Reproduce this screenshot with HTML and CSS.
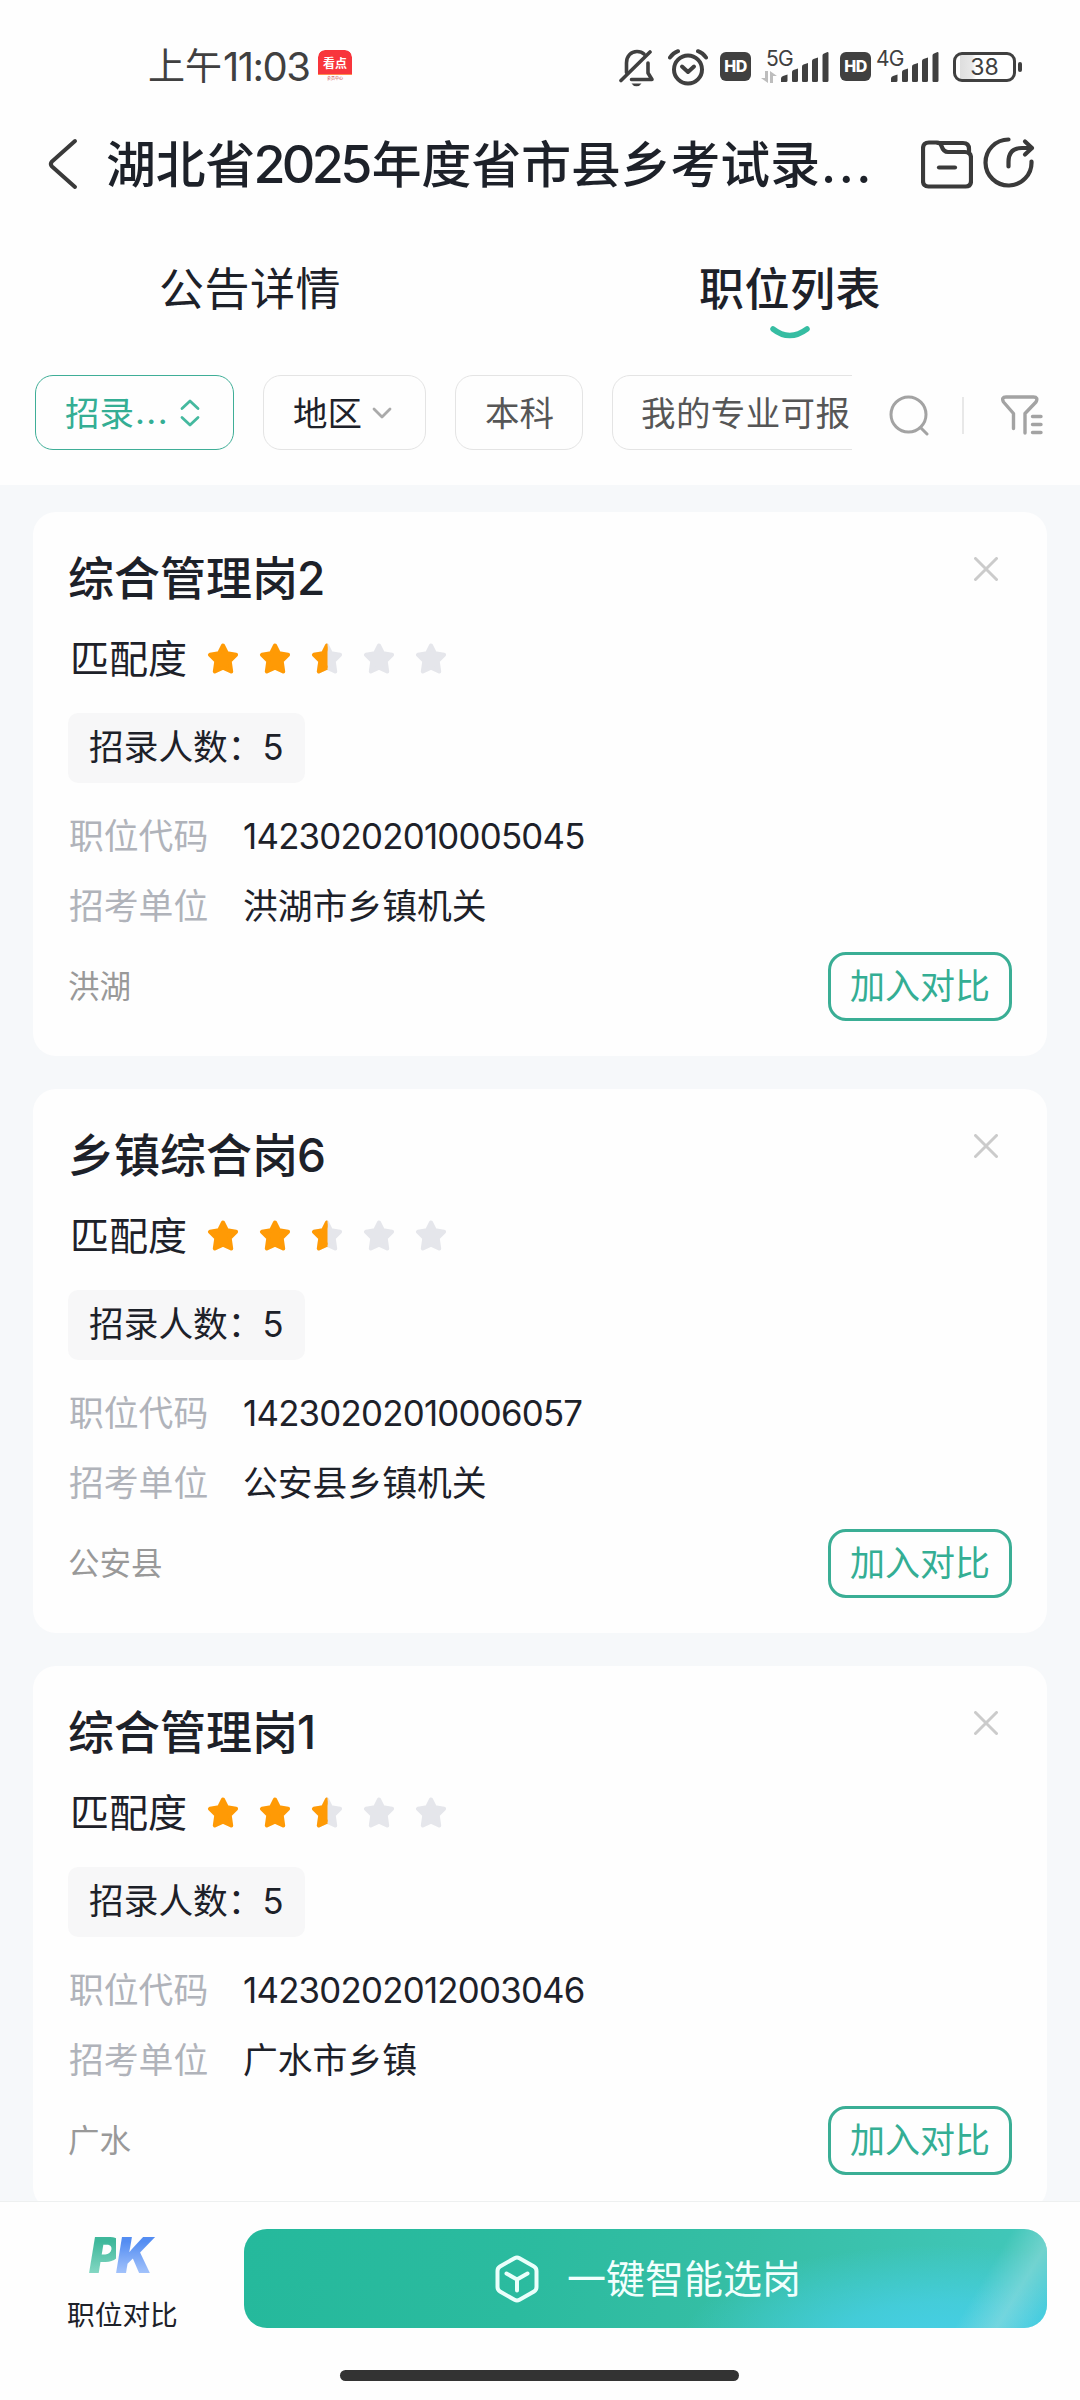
FILE: index.html
```html
<!DOCTYPE html>
<html lang="zh-CN">
<head>
<meta charset="utf-8">
<title>职位列表</title>
<link rel="stylesheet" href="styles.css">
</head>
<body>
<svg class="defs" aria-hidden="true">
  <defs>
    <path id="star-shape" d="M16 2.500L20 10.300L29 11.800L22.700 18.100L24.200 28.500L16 24.600L7.800 28.500L9.300 18.100L3 11.800L12 10.300Z" stroke-width="4" stroke-linejoin="round"/>
    <clipPath id="left-half"><rect x="0" y="0" width="16.500" height="33"/></clipPath>
    <symbol id="star-full" viewBox="0 0 32 32"><use href="#star-shape" fill="#ff9a05" stroke="#ff9a05"/></symbol>
    <symbol id="star-empty" viewBox="0 0 32 32"><use href="#star-shape" fill="#e5e6eb" stroke="#e5e6eb"/></symbol>
    <symbol id="star-half" viewBox="0 0 32 32"><use href="#star-shape" fill="#e5e6eb" stroke="#e5e6eb"/><g clip-path="url(#left-half)"><use href="#star-shape" fill="#ff9a05" stroke="#ff9a05"/></g></symbol>
    <symbol id="close" viewBox="0 0 24 24"><path d="M1.500 1.500L22.500 22.500M22.500 1.500L1.500 22.500" stroke="#cbcbcb" stroke-width="3" stroke-linecap="round"/></symbol>
    <symbol id="signal" viewBox="0 0 48 30"><g fill="#404040"><path d="M0 30V26.500Q0 24.500 2 24L6.500 22.500V28.500Q6.500 30 5 30Z"/><path d="M11 29V20Q11 18.500 12.500 18L17 16.500V28.500Q17 30 15.500 30H12Q11 30 11 29Z"/><path d="M21 29V14.500Q21 13 22.500 12.500L27 11V28.500Q27 30 25.500 30H22Q21 30 21 29Z"/><path d="M31 29V9Q31 7.500 32.500 7L37 5.500V28.500Q37 30 35.500 30H32Q31 30 31 29Z"/><path d="M41.500 29V3.500Q41.500 2 43 1.500L46.500 0Q47.500 0 47.500 1V28.500Q47.500 30 46 30H42.500Q41.500 30 41.500 29Z"/></g></symbol>
  </defs>
</svg>
<div class="screen">
  <div class="status">
    <span class="clock">上午<span class="clock-num">11:03</span></span>
    <span class="app-badge"><span class="app-top">看点</span><span class="app-sub">会员中心</span></span>
    <svg class="bell" viewBox="0 0 36 38" width="36" height="38" fill="none" stroke="#404040" stroke-width="3.600" stroke-linecap="round" stroke-linejoin="round"><path d="M7.500 23.500V14C7.500 7 12 2.500 18 2.500C21 2.500 23.500 3.500 25 5"/><path d="M12.500 30.500H33L29 24V14"/><path d="M2 31.500L31 3"/><path d="M12.500 34.500H22.500Q21 37.200 17.500 37.200T12.500 34.500Z" fill="#404040" stroke="none"/></svg>
    <svg class="alarm" viewBox="0 0 40 37" width="40" height="37" fill="none" stroke="#404040" stroke-width="4" stroke-linecap="round" stroke-linejoin="round"><circle cx="20" cy="20.500" r="14"/><path d="M14 17.500L20 23L26 17.500"/><path d="M2 8.500Q5 4 10 2.200M38 8.500Q35 4 30 2.200"/></svg>
    <span class="hd hd-a">HD</span>
    <span class="net net-a">5G<svg class="updown" viewBox="0 0 16 12" width="16" height="12" fill="#bdbdbd"><path d="M4 0H7V12L0 7H4Z"/><path d="M9 12V0L16 5H12V12Z"/></svg></span>
    <svg class="sig-a" width="48" height="30"><use href="#signal"/></svg>
    <span class="hd hd-b">HD</span>
    <span class="net net-b">4G</span>
    <svg class="sig-b" width="48" height="30"><use href="#signal"/></svg>
    <span class="battery">38</span><span class="nub"></span>
  </div>

  <header class="header">
    <svg class="back" viewBox="0 0 30 52" width="30" height="52" fill="none" stroke="#3a3a3a" stroke-width="4" stroke-linecap="round" stroke-linejoin="round"><path d="M27 3L4 23.500Q1.500 26 4 28.500L27 49"/></svg>
    <h1 class="title">湖北省<span class="title-num">2025</span>年度省市县乡考试录<span class="title-dots">...</span></h1>
    <svg class="folder" viewBox="0 0 52 50" width="52" height="50" fill="none" stroke="#3a3a3a" stroke-width="4.200" stroke-linecap="round" stroke-linejoin="round"><path d="M8 2.500H16Q19 2.500 20.500 6Q22.500 12 27 12H44Q50 12 50 18V41Q50 46.500 44.500 46.500H7.500Q2 46.500 2 41V8.500Q2 2.500 8 2.500Z"/><path d="M17 3H42Q48 3 48 9V13"/><path d="M18 27.500H34"/></svg>
    <svg class="share" viewBox="0 0 52 52" width="52" height="52" fill="none" stroke="#3a3a3a" stroke-width="4.200" stroke-linecap="round" stroke-linejoin="round"><path d="M25.500 3.500A23 23 0 1 0 48.500 25.500"/><path d="M25.500 30.500V26Q25.500 12 39 12H48.500"/><path d="M42 5.500L49 12L42 18.500"/></svg>
  </header>

  <nav class="tabs">
    <div class="tab">公告详情</div>
    <div class="tab active">职位列表<svg class="smile" viewBox="0 0 40 13" width="40" height="13" fill="none" stroke="#36bda2" stroke-width="5.500" stroke-linecap="round"><path d="M3 3Q19.500 16 37 3"/></svg></div>
  </nav>

  <div class="filters">
    <div class="chips">
      <div class="chip selected">招录<span class="chip-dots">...</span><svg class="sort" viewBox="0 0 20 28" width="20" height="28" fill="none" stroke="#45b99f" stroke-width="2.800" stroke-linecap="round" stroke-linejoin="round"><path d="M2 9.500L10 2L18 9.500M2 18.500L10 26L18 18.500"/></svg></div>
      <div class="chip region">地区<svg class="down" viewBox="0 0 20 12" width="20" height="12" fill="none" stroke="#aaa" stroke-width="2.800" stroke-linecap="round" stroke-linejoin="round"><path d="M2 2L10 10L18 2"/></svg></div>
      <div class="chip degree">本科</div>
      <div class="chip major">我的专业可报</div>
    </div>
    <svg class="search" viewBox="0 0 42 42" width="42" height="42" fill="none" stroke="#a3a3a3" stroke-width="3" stroke-linecap="round"><circle cx="20.500" cy="20.500" r="17.500"/><path d="M33 34L39 40"/></svg>
    <span class="divider"></span>
    <svg class="funnel" viewBox="0 0 42 40" width="42" height="40" fill="none" stroke="#a3a3a3" stroke-width="3.400" stroke-linecap="round" stroke-linejoin="round"><path d="M12.500 33.500V18.500L2.500 7Q0 2 5 2H32.500Q37.500 2 35 7L24 18.500V38"/><path d="M31.500 21.500H40M31.500 29.500H40M31.500 37.500H40"/></svg>
  </div>

  <main class="list">
    <article class="card">
      <div class="card-head"><h2>综合管理岗<span>2</span></h2><svg class="close" width="24" height="24"><use href="#close"/></svg></div>
      <div class="match">匹配度<div class="stars"><svg><use href="#star-full"/></svg><svg><use href="#star-full"/></svg><svg><use href="#star-half"/></svg><svg><use href="#star-empty"/></svg><svg><use href="#star-empty"/></svg></div></div>
      <div class="tag">招录人数：<span>5</span></div>
      <dl><dt>职位代码</dt><dd class="code">14230202010005045</dd><dt>招考单位</dt><dd>洪湖市乡镇机关</dd></dl>
      <div class="card-foot"><span class="place">洪湖</span><button class="compare">加入对比</button></div>
    </article>
    <article class="card">
      <div class="card-head"><h2>乡镇综合岗<span>6</span></h2><svg class="close" width="24" height="24"><use href="#close"/></svg></div>
      <div class="match">匹配度<div class="stars"><svg><use href="#star-full"/></svg><svg><use href="#star-full"/></svg><svg><use href="#star-half"/></svg><svg><use href="#star-empty"/></svg><svg><use href="#star-empty"/></svg></div></div>
      <div class="tag">招录人数：<span>5</span></div>
      <dl><dt>职位代码</dt><dd class="code">14230202010006057</dd><dt>招考单位</dt><dd>公安县乡镇机关</dd></dl>
      <div class="card-foot"><span class="place">公安县</span><button class="compare">加入对比</button></div>
    </article>
    <article class="card">
      <div class="card-head"><h2>综合管理岗<span>1</span></h2><svg class="close" width="24" height="24"><use href="#close"/></svg></div>
      <div class="match">匹配度<div class="stars"><svg><use href="#star-full"/></svg><svg><use href="#star-full"/></svg><svg><use href="#star-half"/></svg><svg><use href="#star-empty"/></svg><svg><use href="#star-empty"/></svg></div></div>
      <div class="tag">招录人数：<span>5</span></div>
      <dl><dt>职位代码</dt><dd class="code">14230202012003046</dd><dt>招考单位</dt><dd>广水市乡镇</dd></dl>
      <div class="card-foot"><span class="place">广水</span><button class="compare">加入对比</button></div>
    </article>
  </main>

  <footer class="footer">
    <div class="actions">
      <div class="pk"><div class="pk-logo"><span class="pk-p">P</span><span class="pk-k">K</span></div><div class="pk-label">职位对比</div></div>
      <button class="smart"><svg viewBox="0 0 44 48" width="44" height="48" fill="none" stroke="#eafffb" stroke-width="4" stroke-linecap="round" stroke-linejoin="round"><path d="M19.500 3.200Q22 1.800 24.500 3.200L39 11.500Q41.500 13 41.500 16V32Q41.500 35 39 36.500L24.500 44.800Q22 46.200 19.500 44.800L5 36.500Q2.500 35 2.500 32V16Q2.500 13 5 11.500Z"/><path d="M11.500 18.500L22 24.500L32.500 18.500M22 24.500V35.500"/></svg><span>一键智能选岗</span></button>
    </div>
    <div class="home-bar"></div>
  </footer>
</div>
</body>
</html>
```
FILE: styles.css
```css
* { box-sizing: border-box; }
body { margin: 0; background: #fefefe; color: #1d2129; font-family: "Inter", "Noto Sans CJK SC", sans-serif; }
button { font: inherit; }
svg { display: block; flex: none; }
.defs { position: absolute; width: 0; height: 0; }
.screen { width: 1080px; height: 2400px; overflow: hidden; display: flex; flex-direction: column; white-space: nowrap; }

/* status bar */
.status { height: 120px; padding: 14px 0 0 148px; display: flex; align-items: flex-start; color: #404040; flex: none; }
.clock { width: 170px; margin-top: 33px; height: 40px; line-height: 40px; font-size: 37px; display: flex; }
.clock-num { margin-left: 1px; font-size: 40px; letter-spacing: -1.5px; }
.app-badge { width: 34px; height: 36px; margin-top: 36px; border-radius: 7px; overflow: hidden; text-align: center; }
.app-top { display: block; height: 25px; line-height: 28px; background: #f8353c; color: #fff; font-size: 12px; font-weight: 700; border-radius: 7px 7px 0 0; border-bottom: 1px solid #ff8b4d; }
.app-sub { display: block; font-size: 4px; line-height: 8px; color: #c8302f; }
.bell { margin: 35px 0 0 267px; }
.alarm { margin: 35px 0 0 13px; }
.hd { width: 31px; height: 29px; margin-top: 38px; border-radius: 6px; background: #404040; color: #fff; font-size: 16px; font-weight: 800; line-height: 29px; text-align: center; letter-spacing: -.5px; }
.hd-a { margin-left: 12px; }
.net { font-size: 21px; line-height: 24px; margin-top: 33px; width: 27px; letter-spacing: -.8px; }
.net-a { margin-left: 15px; }
.updown { margin: 0 0 0 -5px; }
.sig-a { margin: 38px 0 0 -12px; }
.hd-b { margin-left: 11px; }
.net-b { margin-left: 5px; }
.sig-b { margin: 38px 0 0 -12px; }
.battery { width: 63px; height: 30px; margin: 38px 0 0 14px; border: 3px solid #404040; border-radius: 9px; font-size: 23px; line-height: 25px; text-align: center; background: linear-gradient(90deg, #fff 4px, #dedede 4px, #e8e8e8 16px, #fff 20px); }
.nub { width: 4px; height: 10px; margin: 48px 0 0 2px; border-radius: 2px; background: #404040; }

/* title bar */
.header { height: 100px; flex: none; display: flex; padding-left: 48px; align-items: flex-start; }
.back { margin-top: 18px; }
.title { margin: 7px 0 0 28px; width: 815px; height: 76px; line-height: 76px; font-size: 49.8px; font-weight: 500; }
.title-num { font-size: 52px; letter-spacing: -3.6px; margin: 0 3px 0 -2px; }
.title-dots { letter-spacing: 2.600px; margin-left: 1px; }
.folder { margin-top: 20px; }
.share { margin: 16px 0 0 10px; }

/* tabs */
.tabs { height: 155px; flex: none; display: grid; grid-template-columns: 1fr 1fr; }
.tab { display: flex; flex-direction: column; align-items: center; padding: 36px 40px 0 0; font-size: 45px; line-height: 68px; height: 118px; letter-spacing: .5px; }
.tab.active { font-weight: 500; }
.smile { margin-top: 2px; }

/* filter row */
.filters { height: 110px; flex: none; display: flex; padding-left: 35px; }
.chips { width: 817px; display: flex; gap: 29px; overflow: hidden; }
.chip { flex: none; height: 75px; padding: 0 29px 3px 29px; border: 1px solid #e4e4e4; border-radius: 18px; display: flex; align-items: center; font-size: 34.500px; color: #565656; }
.chip.selected { width: 199px; border-color: #3fae97; color: #34ae94; }
.chip-dots { letter-spacing: 1.4px; margin-left: 1px; }
.sort { margin: 3px 0 0 11px; }
.chip.region { width: 163px; color: #1d2129; }
.chip.degree { width: 128px; }
.chip.major { padding-left: 28px; letter-spacing: .4px; }
.down { margin: 3px 0 0 10px; }
.search { margin: 19px 0 0 36px; }
.divider { width: 2px; height: 37px; margin: 22px 0 0 32px; background: #e8e8e8; }
.funnel { margin: 20px 0 0 37px; }

/* job cards */
.list { flex: 1; min-height: 0; overflow: hidden; padding: 27px 33px 0; background: #f6f8fa; display: flex; flex-direction: column; gap: 33px; }
.card { flex: none; height: 544px; border-radius: 23px; background: #fefefe; padding: 32px 35px 0 35px; }
.card-head { height: 68px; display: flex; justify-content: space-between; }
h2 { margin: 0; font-size: 46px; line-height: 69px; font-weight: 500; }
h2 span { margin-left: -1px; }
.close { margin: 13px 14px 0 0; }
.match { height: 58px; margin-top: 18px; line-height: 58px; font-size: 39px; display: flex; align-items: center; padding-left: 2px; }
.stars { display: flex; gap: 20px; margin-left: 20px; }
.stars svg { width: 32px; height: 32px; }
.tag { width: 237px; height: 70px; margin-top: 25px; padding-left: 21px; border-radius: 10px; background: #f7f7f8; line-height: 69px; font-size: 34.700px; }
.tag span { margin-left: 0; }
dl { margin: 18px 0 0; display: grid; grid-template-columns: 174px 1fr; grid-auto-rows: 70px; line-height: 70px; font-size: 34.800px; padding-left: 1px; }
dt { color: #b0b3ba; }
dd { margin: 0; }
.code { letter-spacing: -.75px; }
.card-foot { height: 70px; margin-top: 10px; display: flex; justify-content: space-between; align-items: center; }
.place { font-size: 31.500px; line-height: 44px; margin-top: 1px; color: #999; }
.compare { width: 184px; height: 69px; padding: 0; border: 3px solid #3aae95; border-radius: 18px; background: none; color: #34ae94; font-size: 35px; line-height: 61px; }

/* bottom bar */
.footer { height: 199px; flex: none; border-top: 1px solid #eef0f0; background: #fefefe; display: flex; flex-direction: column; align-items: center; }
.actions { width: 100%; height: 168px; padding: 27px 33px 0 67px; display: flex; }
.pk { width: 177px; }
.pk-logo { height: 50px; line-height: 54px; padding-left: 22px; font-size: 49px; font-weight: 900; font-style: italic; display: flex; }
.pk-logo span { background-clip: text; -webkit-background-clip: text; color: transparent; }
.pk-p { width: 27px; background-image: linear-gradient(180deg, #3fb89b 25%, #86d8c4 90%); }
.pk-k { width: 45px; background-image: linear-gradient(180deg, #548df2 25%, #a5c4fb 90%); }
.pk-label { font-size: 27.700px; line-height: 40px; margin-top: 16px; }
.smart { width: 803px; height: 99px; padding: 0 0 0 5px; border: 0; border-radius: 23px; display: flex; align-items: center; justify-content: center; gap: 28px; color: #f2fffd; font-size: 39px; background: radial-gradient(ellipse 260px 95px at 87% 112%, #46cfe6 0%, rgba(70, 207, 230, .75) 40%, rgba(70, 207, 230, 0) 100%), linear-gradient(100deg, #25b99c 0%, #2bbb9f 35%, #36bea5 62%, #43c8bc 100%); position: relative; overflow: hidden; }
.smart span { margin-bottom: 6px; }
.smart::after { content: ""; position: absolute; right: 0; top: 0; width: 110px; height: 99px; background: linear-gradient(121deg, rgba(160, 222, 224, 0) 45%, rgba(160, 222, 224, .5) 70%, rgba(80, 205, 232, .4) 92%); }
.home-bar { width: 399px; height: 11px; margin-right: 1px; border-radius: 6px; background: #333; }
```
